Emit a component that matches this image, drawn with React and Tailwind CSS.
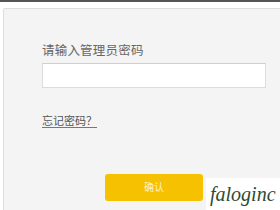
export default function App() {
  return (
    <div className="w-[280px] h-[210px] bg-white overflow-hidden relative" style={{ fontFamily: '"Liberation Sans", "Noto Sans CJK SC", sans-serif' }}>
      <div className="h-[2px] bg-[#555]" />
      <div className="mt-[6px] ml-[3px] w-[290px] h-[220px] bg-[#f4f4f4] border border-[#dedede] rounded-[2px] pl-[38px] pt-[35px]">
        <div className="text-[12.5px] leading-[14px] text-[#666] tracking-[0.2px]">请输入管理员密码</div>
        <div className="mt-[5px] w-[224px] h-[25px] bg-white border border-[#dcdcdc] border-t-[#cfcfcf]" />
        <div className="mt-[27px] text-[11px] leading-[13px] text-[#555] underline underline-offset-2 decoration-[#777]">忘记密码？</div>
        <div className="mt-[46px] ml-[63px] w-[98px] h-[27px] bg-[#f6c100] rounded-[3px] flex items-center justify-center text-[10px] text-[#fff3c0]">确认</div>
      </div>
      <div className="absolute left-[206px] top-[178px] w-[74px] h-[32px] bg-white flex items-center pl-[4px] text-[20px] text-[#2f4a34] italic whitespace-nowrap" style={{ fontFamily: '"Liberation Serif", serif' }}>faloginc</div>
    </div>
  );
}
